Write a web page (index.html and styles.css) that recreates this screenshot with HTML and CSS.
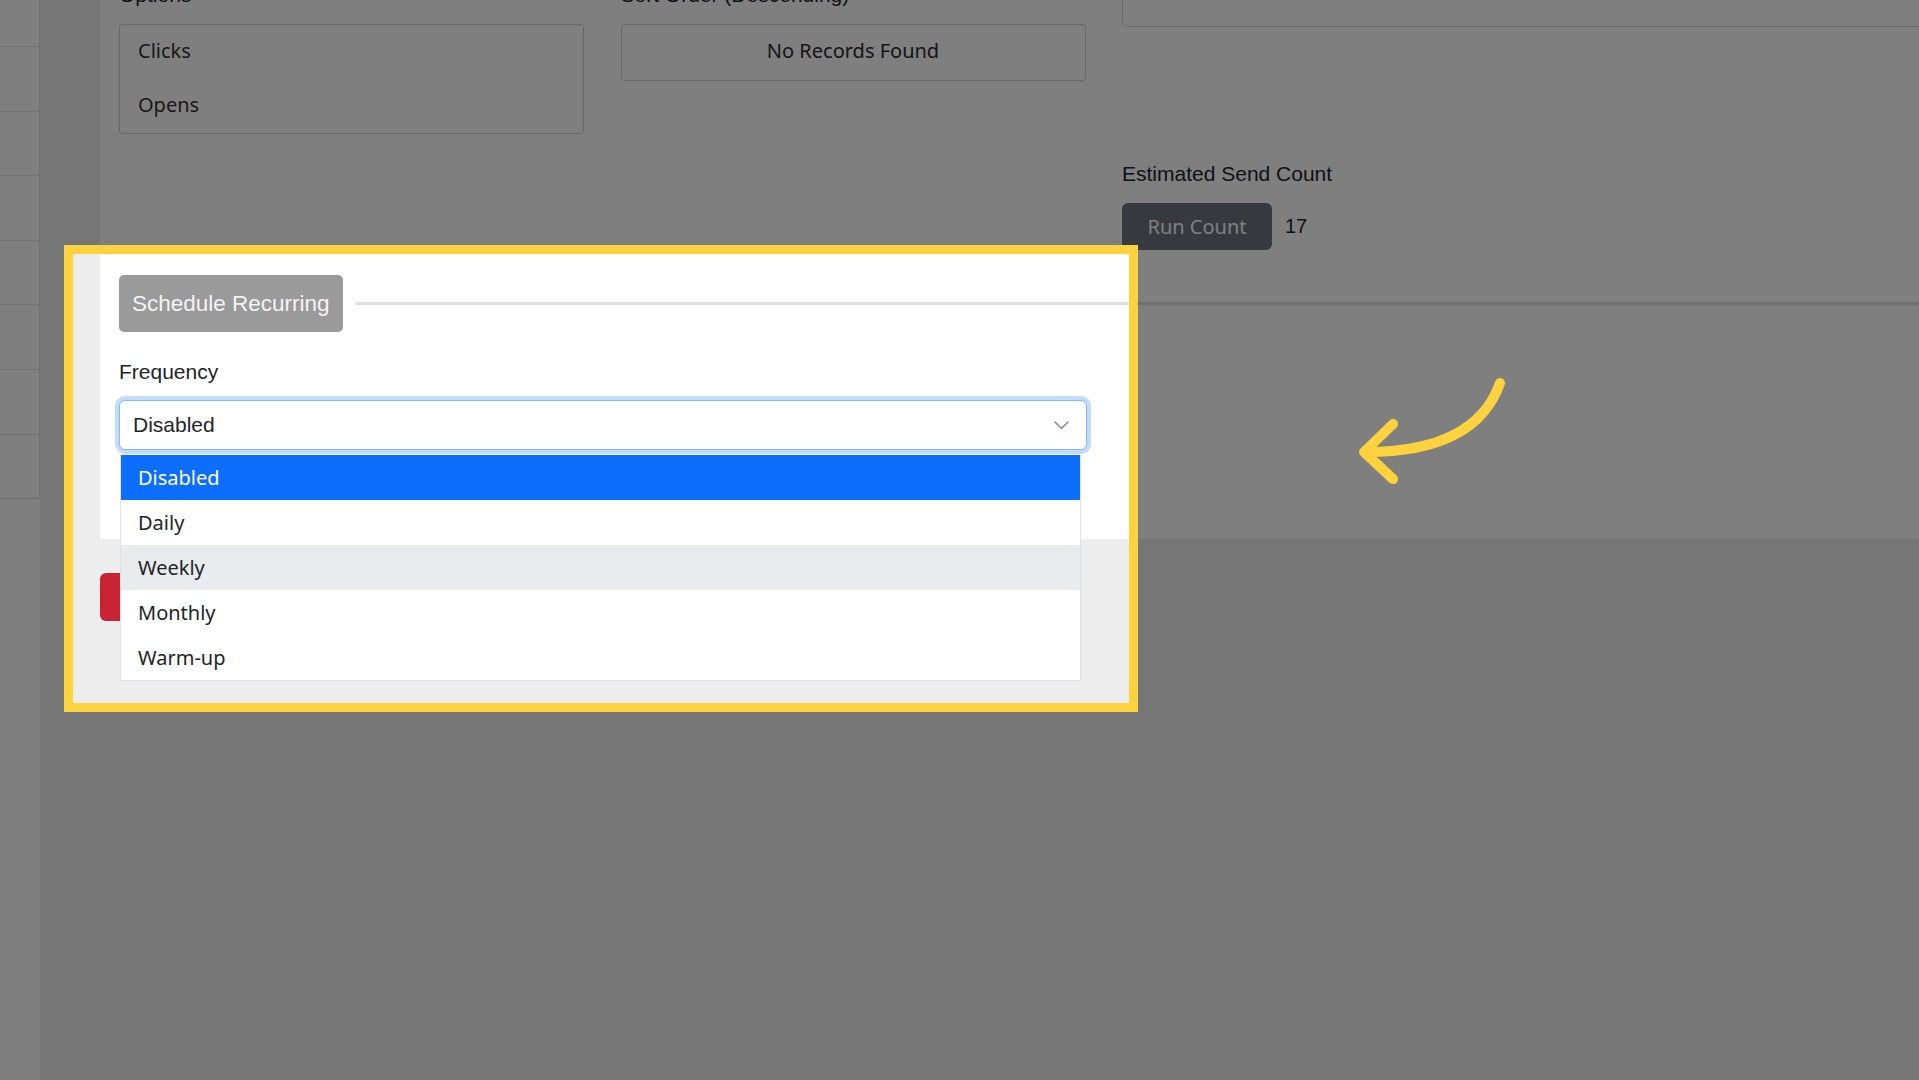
FILE: index.html
```html
<!DOCTYPE html>
<html lang="en">
<head>
  <meta charset="UTF-8" />
  <meta name="viewport" content="width=device-width, initial-scale=1.0"/>
  <title>Campaign Schedule</title>
  <link rel="stylesheet" href="styles.css">
</head>
<body>

<aside class="sidebar">
  <a class="side-item"></a>
  <a class="side-item"></a>
  <a class="side-item"></a>
  <a class="side-item"></a>
  <a class="side-item"></a>
  <a class="side-item"></a>
  <a class="side-item"></a>
  <a class="side-item"></a>
</aside>

<main class="content">
  <section class="card">
    <div class="filters">
      <div class="col">
        <label class="col-label">Options</label>
        <div class="listbox">
          <div class="list-item">Clicks</div>
          <div class="list-item">Opens</div>
        </div>
      </div>

      <div class="col">
        <label class="col-label">Sort Order (Descending)</label>
        <div class="empty-box">No Records Found</div>
      </div>

      <div class="col">
        <div class="notes-box"></div>
        <div class="estimate-label">Estimated Send Count</div>
        <div class="estimate-row">
          <button class="btn btn-secondary">Run Count</button>
          <span class="estimate-value">17</span>
        </div>
      </div>
    </div>

    <div class="legend-row">
      <span class="legend">Schedule Recurring</span>
      <span class="legend-line"></span>
    </div>

    <div class="field">
      <label class="field-label">Frequency</label>
      <div class="select-wrap">
        <div class="select">
          <span>Disabled</span>
          <svg class="chevron" width="15" height="9" viewBox="0 0 15 9">
            <path d="M1 1 L7.5 7.5 L14 1" fill="none" stroke="#8c8c8c" stroke-width="1.6" stroke-linecap="round" stroke-linejoin="round"/>
          </svg>
        </div>
        <ul class="options">
          <li class="selected">Disabled</li>
          <li>Daily</li>
          <li class="hover">Weekly</li>
          <li>Monthly</li>
          <li>Warm-up</li>
        </ul>
      </div>
    </div>
  </section>

  <div class="actions">
    <button class="btn btn-danger" aria-label="Delete"></button>
  </div>
</main>

<!-- highlight frame, dims the rest of the page -->
<div class="spotlight"></div>

<svg class="callout" width="190" height="140" viewBox="1340 360 190 140">
  <path d="M1500 383 C1480 440 1420 452 1366 452" fill="none" stroke="#fdd23e" stroke-width="10" stroke-linecap="round"/>
  <path d="M1393 424 L1364 452 L1393 479" fill="none" stroke="#fdd23e" stroke-width="10" stroke-linecap="round" stroke-linejoin="round"/>
</svg>

</body>
</html>
```

FILE: styles.css
```css
* { margin: 0; padding: 0; box-sizing: border-box; }
body {
  display: flex; height: 1080px; overflow: hidden;
  background: #ededed; color: #212529;
  font-family: 'Liberation Sans', Arial, sans-serif;
}

.sidebar { width: 40px; background: #fff; flex-shrink: 0; }
.side-item {
  display: block; height: 64.6px;
  border-bottom: 1px solid #e2e2e2; border-right: 1px solid #e2e2e2;
}
.side-item:first-child { margin-top: -17.6px; }

.content { flex: 1; min-width: 0; padding-left: 60px; }

.card { background: #fff; width: calc(100% + 40px); padding: 0 19px 89px; }

.filters { display: grid; grid-template-columns: 465px 465px 1fr; column-gap: 36.5px; }
.col-label { display: block; font-size: 21px; line-height: 31.5px; margin: -21.5px 0 14px; }

.listbox { border: 1px solid #ced4da; border-radius: 3px; }
.list-item {
  height: 54px; line-height: 52px; padding-left: 18px;
  font-family: 'Noto Sans', sans-serif; font-size: 20px; color: #333;
}

.empty-box {
  height: 57px; line-height: 52px; text-align: center;
  border: 1px solid #ced4da; border-radius: 3px;
  font-family: 'Noto Sans', sans-serif; font-size: 20px; color: #2a2a2a;
}

.notes-box { height: 57px; margin-top: -30px; border: 1px solid #ced4da; border-radius: 6px; }
.estimate-label { font-size: 21px; line-height: 31.5px; margin: 131px 0 13.5px; }
.estimate-row { display: flex; align-items: center; gap: 13px; }
.estimate-value { font-size: 20px; }

.btn {
  border: none; border-radius: 6px; color: #fff;
  font-family: 'Noto Sans', sans-serif; font-size: 20px;
}
.btn-secondary { width: 150px; height: 47px; background: #6c757d; }
.btn-danger { width: 120px; height: 48px; background: #c82333; }

.legend-row { display: flex; align-items: center; margin-top: 25px; }
.legend {
  background: #9a9a9a; color: #f4f4f4; border-radius: 5px;
  font-size: 22.5px; line-height: 33px; padding: 12px 13px;
}
.legend-line { flex: 1; height: 3px; background: #e0e0e0; margin-left: 12px; }

.field { width: 968px; }
.field-label { display: block; font-size: 21px; line-height: 31.5px; margin: 24px 0 12.5px; }

.select-wrap { position: relative; }
.select {
  display: flex; align-items: center; height: 50px; padding: 0 13px;
  border: 1px solid #86b7fe; border-radius: 6px;
  box-shadow: 0 0 0 4px rgba(13,110,253,.25);
  font-size: 21px; background: #fff;
}
.chevron { margin-left: auto; margin-right: 4px; }

.options {
  position: absolute; top: 55px; left: 1px; width: 961px; z-index: 5;
  list-style: none; background: #fff;
  border: 1px solid #dfe3e7; border-top: none;
  font-family: 'Noto Sans', sans-serif; font-size: 20px; color: #212529;
}
.options li { height: 45px; line-height: 45px; padding-left: 17px; }
.options li.selected { background: #0d6efd; color: #fff; }
.options li.hover { background: #e9ecef; }

.actions { margin-top: 34px; }

.spotlight {
  position: absolute; left: 64px; top: 245px; width: 1074px; height: 467px; z-index: 10;
  border: 9px solid #fdd23e;
  box-shadow: 0 0 0 3000px rgba(0,0,0,.5);
  pointer-events: none;
}
.callout { position: absolute; left: 1340px; top: 360px; z-index: 11; }
```
